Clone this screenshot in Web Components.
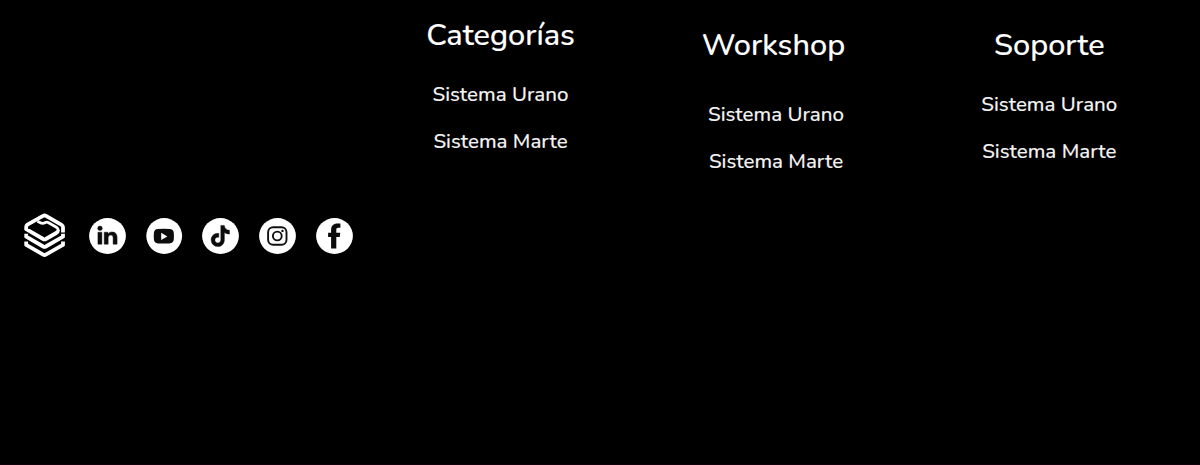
<!DOCTYPE html>
<html lang="es"><head><meta charset="utf-8"><title>Footer</title>
<style>html,body{margin:0;background:#000}body{font-family:Nunito,Lato,"Noto Sans",sans-serif;color:#fff}</style></head>
<body><site-footer></site-footer>
<script>
class FooterLink extends HTMLElement{
  constructor(){super();this.attachShadow({mode:'open'}).innerHTML=`<style>
  :host{display:block;height:46.5px;line-height:46.5px;font-size:20.5px;font-weight:500;color:#f2f2f2;white-space:nowrap;-webkit-text-stroke:.12px #f2f2f2}
  a{color:inherit;text-decoration:none}</style><a><slot></slot></a>`}
}
customElements.define('footer-link',FooterLink);
class FooterColumn extends HTMLElement{
  constructor(){super();this.attachShadow({mode:'open'}).innerHTML=`<style>
  :host{display:flex;flex-direction:column;align-items:center;width:200px}
  h2{margin:0 0 var(--gap,11px);font-size:30.7px;line-height:50px;font-weight:500;white-space:nowrap;padding-right:var(--nudge,0);-webkit-text-stroke:.15px #fff}
  </style><h2></h2><slot></slot>`}
  connectedCallback(){this.shadowRoot.querySelector('h2').textContent=this.getAttribute('heading')}
}
customElements.define('footer-column',FooterColumn);
const icons={
 linkedin:'<g stroke="#0c0c0c" stroke-width=".4"><circle cx="11" cy="10.3" r="2.3"/><path d="M8.9 14.2h4v12h-4zM15.2 14.2H19v1.8c.8-1.4 2-2.1 3.9-2.1 3.4 0 5.2 2 5.2 5.6v6.7h-4v-6.1c0-1.9-.7-3-2.3-3-1.7 0-2.6 1.2-2.6 3v6.1h-4z"/></g>',
 youtube:'<path d="M12 11Q18 10.5 23.4 11Q27.5 11.2 27.8 15Q28.1 18.2 27.8 21.5Q27.5 25.1 23.4 25.4Q18 25.8 12 25.4Q8.2 25.1 7.9 21.5Q7.6 18.2 7.9 15Q8.2 11.2 12 11Z"/><path fill="#fff" d="m15.2 14.8 6.1 3.6-6.1 3.5z"/>',
 tiktok:'<path stroke="#0c0c0c" stroke-width=".4" d="M18.8 7.4h3.5c.4 2.9 2.2 4.7 5.2 4.9v3.8c-1.9 0-3.6-.5-5.1-1.5v7.1c0 4-2.8 6.9-6.6 6.9A6.7 6.7 0 0 1 9.1 22c0-4.1 3.5-7.2 7.7-6.6v3.9c-2-.6-3.9.7-3.9 2.7 0 1.7 1.3 2.9 2.9 2.9 1.8 0 3-1.2 3-3.1z"/>',
 instagram:'<g fill="none" stroke="#111" stroke-width="1.9"><rect x="9.1" y="9.2" width="18.4" height="17.6" rx="5"/><circle cx="18.3" cy="18" r="4.4"/></g><circle cx="23.5" cy="12.9" r="1.2"/>',
 facebook:'<path d="M15.1 30.6V19h-3v-4.3h3V12c0-4.3 2.3-6.5 6.5-6.5h2.8v4.3h-2c-1.7 0-2.1.8-2.1 2.2v2.7h4l-.6 4.3h-3.4v11.6z"/>'};
class SocialIcon extends HTMLElement{
  constructor(){super();this.attachShadow({mode:'open'})}
  connectedCallback(){const n=this.getAttribute('name'),yt=n==='youtube';this.shadowRoot.innerHTML=`<style>:host{display:block;width:37px;height:36px}svg{display:block}</style>
  <svg width="37" height="36" viewBox="0 0 37 36" fill="#0c0c0c"><ellipse cx="${yt?18.2:18.5}" cy="18" rx="${yt?17.9:18.4}" ry="17.9" fill="#fff"/>${icons[n]}</svg>`}
}
customElements.define('social-icon',SocialIcon);
class BrandLogo extends HTMLElement{
  constructor(){super();this.attachShadow({mode:'open'}).innerHTML=`<style>:host{display:block;width:43px;height:46px;margin-right:3px}svg{display:block}</style>
  <svg width="43" height="46" viewBox="0 0 43 46" fill="none" stroke="#fff" stroke-width="3.8" stroke-linejoin="round">
  <path d="M40 19.6V14.2Q40 12.6 38.6 11.8L23 2.9Q21.5 2 20 2.9L4.4 11.7Q3.2 12.5 3.2 14V16.2L20.2 26Q21.5 26.7 22.8 26L33.2 20Q35 18.8 35 17.2"/>
  <path stroke-width="2.8" d="M35.4 18Q35.4 15.4 33.4 14.2L25.6 9.7Q24 8.8 22.4 9.5 19.5 11 17.4 9.8L14.4 8.3"/>
  <path d="M3.2 20.7V23.7L20.2 33.5Q21.5 34.2 22.8 33.5L40 23.7V20.7M3.2 28.6V31.9L20.2 41.6Q21.5 42.4 22.8 41.6L40 31.9V28.6"/></svg>`}
}
customElements.define('brand-logo',BrandLogo);
class SiteFooter extends HTMLElement{
  constructor(){super();this.attachShadow({mode:'open'}).innerHTML=`<style>
  :host{display:grid;grid-template-columns:400.5px 275.5px 273.3px 250.7px;align-items:start;height:465px;box-sizing:border-box;background:#000;border-bottom:1px solid #100009}
  .social{display:flex;align-items:flex-start;gap:19.75px;padding:212.5px 0 0 23px}
  .cat{padding-top:10px}.work{padding-top:20px;--gap:21px;--nudge:5px}.sup{padding-top:20px}
  social-icon{margin-top:5.5px}
  </style><div class="social"><brand-logo></brand-logo>${Object.keys(icons).map(n=>`<social-icon name="${n}"></social-icon>`).join('')}</div>
  ${[['Categorías','cat'],['Workshop','work'],['Soporte','sup']].map(([h,c])=>`<footer-column class="${c}" heading="${h}"><footer-link>Sistema Urano</footer-link><footer-link>Sistema Marte</footer-link></footer-column>`).join('')}`}
}
customElements.define('site-footer',SiteFooter);
</script></body></html>
